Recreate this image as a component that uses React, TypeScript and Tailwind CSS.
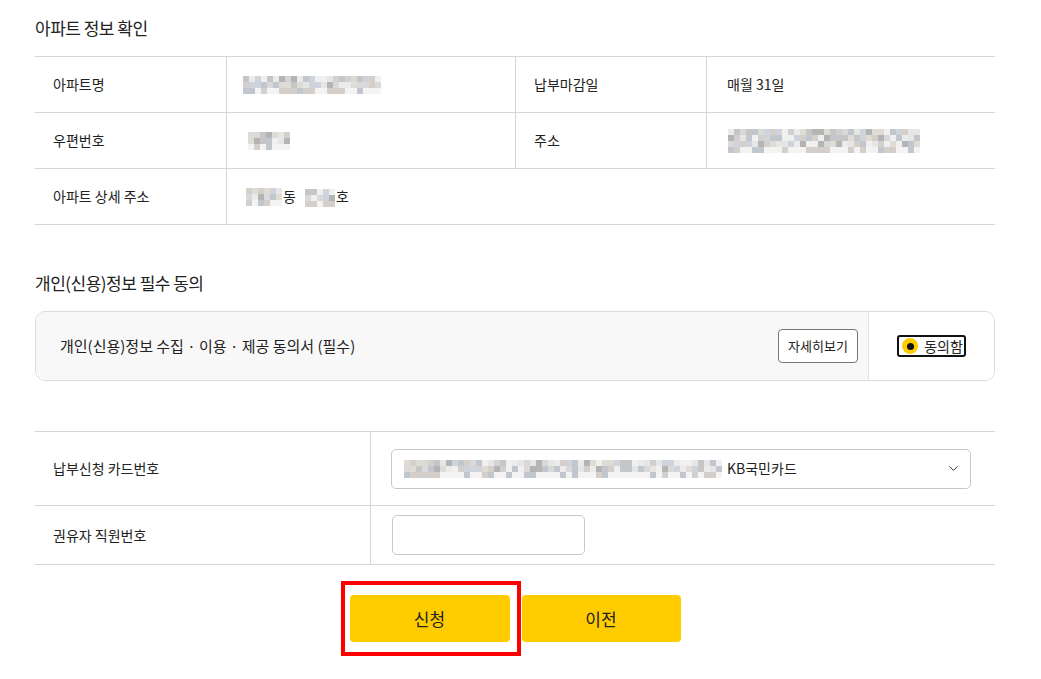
import React from 'react';
import { ChevronDown } from 'lucide-react';

const palette = ['#e6e6e6', '#d9d9d9', '#c6c6c6', '#cfd3dc', '#b4b4b4', '#dfdbd5', '#f0f0f0', '#c2c6cf', '#d4cfca', '#ebebeb'];

// deterministic mosaic for masked values
const Mosaic = ({ cols, rows = 3, seed = 1, cell = 6 }: { cols: number; rows?: number; seed?: number; cell?: number }) => {
  let s = seed * 9301 + 49297;
  const next = () => {
    s = (s * 9301 + 49297) % 233280;
    return s / 233280;
  };
  const cells: string[] = [];
  for (let i = 0; i < cols * rows; i++) {
    const r = next();
    const row = Math.floor(i / cols);
    if (row === rows - 1) cells.push(r < 0.5 ? '#f3f3f3' : palette[Math.floor(r * 3) + 6] || '#eeeeee');
    else cells.push(palette[Math.floor(r * palette.length)]);
  }
  return (
    <span
      className="inline-grid align-middle"
      style={{ gridTemplateColumns: `repeat(${cols}, ${cell}px)`, gridAutoRows: `${cell}px` }}
    >
      {cells.map((c, i) => (
        <span key={i} style={{ background: c }} />
      ))}
    </span>
  );
};

const Label = ({ children, className = '' }: { children: React.ReactNode; className?: string }) => (
  <div className={`flex items-center pl-[18px] text-[14px] text-[#222] ${className}`}>{children}</div>
);

export default function App() {
  return (
    <div className="min-h-[679px] w-[1041px] bg-white text-[#222]" style={{ fontFamily: '"Noto Sans CJK KR", "Noto Sans", sans-serif' }}>
      <div className="ml-[35px] w-[960px] pt-[16px]">
        {/* 아파트 정보 */}
        <h2 className="text-[17px] leading-[24px] font-normal tracking-[-0.5px]">아파트 정보 확인</h2>
        <div className="mt-[16px] border-t border-[#d5d5d5] text-[14px]">
          <div className="grid h-[56px] grid-cols-[192px_289px_191px_288px] border-b border-[#d5d5d5]">
            <Label className="border-r border-[#d5d5d5]">아파트명</Label>
            <div className="flex items-center border-r border-[#d5d5d5] pl-[16px]">
              <Mosaic cols={23} seed={3} />
            </div>
            <Label className="border-r border-[#d5d5d5]">납부마감일</Label>
            <div className="flex items-center pl-[20px]">매월 31일</div>
          </div>
          <div className="grid h-[56px] grid-cols-[192px_289px_191px_288px] border-b border-[#d5d5d5]">
            <Label className="border-r border-[#d5d5d5]">우편번호</Label>
            <div className="flex items-center border-r border-[#d5d5d5] pl-[21px]">
              <Mosaic cols={7} seed={7} />
            </div>
            <Label className="border-r border-[#d5d5d5]">주소</Label>
            <div className="flex items-center pl-[21px]">
              <Mosaic cols={32} rows={4} seed={11} />
            </div>
          </div>
          <div className="grid h-[56px] grid-cols-[192px_1fr] border-b border-[#d5d5d5]">
            <Label className="border-r border-[#d5d5d5]">아파트 상세 주소</Label>
            <div className="flex items-center pl-[19px]">
              <Mosaic cols={6} seed={5} />
              <span className="ml-[1px]">동</span>
              <span className="ml-[9px]"><Mosaic cols={5} seed={9} /></span>
              <span className="ml-[1px]">호</span>
            </div>
          </div>
        </div>

        {/* 동의 */}
        <h2 className="mt-[46px] text-[17px] leading-[24px] font-normal tracking-[-0.5px]">개인(신용)정보 필수 동의</h2>
        <div className="mt-[16px] flex h-[70px] overflow-hidden rounded-[10px] border border-[#dcdcdc]">
          <div className="flex flex-1 items-center justify-between bg-[#f8f8f8] pr-[10px] pl-[24px]">
            <span className="text-[15px]">개인(신용)정보 수집 · 이용 · 제공 동의서 (필수)</span>
            <button className="h-[34px] w-[80px] rounded-[4px] border border-[#777] bg-white text-[13px] text-[#222]">자세히보기</button>
          </div>
          <div className="flex w-[126px] items-center justify-center border-l border-[#e2e2e2] bg-white">
            <label className="flex h-[22px] items-center gap-[6px] rounded-[3px] border-2 border-[#111] pr-[1px] pl-[3px]">
              <span className="flex h-[16px] w-[16px] items-center justify-center rounded-full bg-[#ffcc00]">
                <span className="h-[7px] w-[7px] rounded-full bg-[#111]" />
              </span>
              <span className="text-[14px] leading-none">동의함</span>
            </label>
          </div>
        </div>

        {/* 카드 정보 */}
        <div className="mt-[50px] border-t border-[#d5d5d5] text-[14px]">
          <div className="grid h-[74px] grid-cols-[336px_1fr] border-b border-[#d5d5d5]">
            <Label className="border-r border-[#d5d5d5]">납부신청 카드번호</Label>
            <div className="flex items-center pl-[20px]">
              <div className="flex h-[40px] w-[580px] items-center justify-between rounded-[5px] border border-[#c8c8c8] pr-[9px] pl-[12px]">
                <div className="flex items-center">
                  <Mosaic cols={53} seed={13} />
                  <span className="ml-[5px] text-[14px]">KB국민카드</span>
                </div>
                <ChevronDown size={15} strokeWidth={1.6} className="text-[#333]" />
              </div>
            </div>
          </div>
          <div className="grid h-[59px] grid-cols-[336px_1fr] border-b border-[#d5d5d5]">
            <Label className="border-r border-[#d5d5d5]">권유자 직원번호</Label>
            <div className="flex items-center pl-[21px]">
              <input className="h-[40px] w-[193px] rounded-[5px] border border-[#c8c8c8] outline-none" />
            </div>
          </div>
        </div>

        {/* 버튼 */}
        <div className="mt-[30px] flex justify-center gap-[12px]">
          <div className="relative">
            <button className="h-[47px] w-[160px] rounded-[4px] bg-[#ffcc00] text-[17px] text-[#222]">신청</button>
            <span className="pointer-events-none absolute -top-[14px] -right-[11px] -bottom-[14px] -left-[9px] border-4 border-[#ff0000]" />
          </div>
          <button className="h-[47px] w-[159px] rounded-[4px] bg-[#ffcc00] text-[17px] text-[#222]">이전</button>
        </div>
      </div>
    </div>
  );
}
